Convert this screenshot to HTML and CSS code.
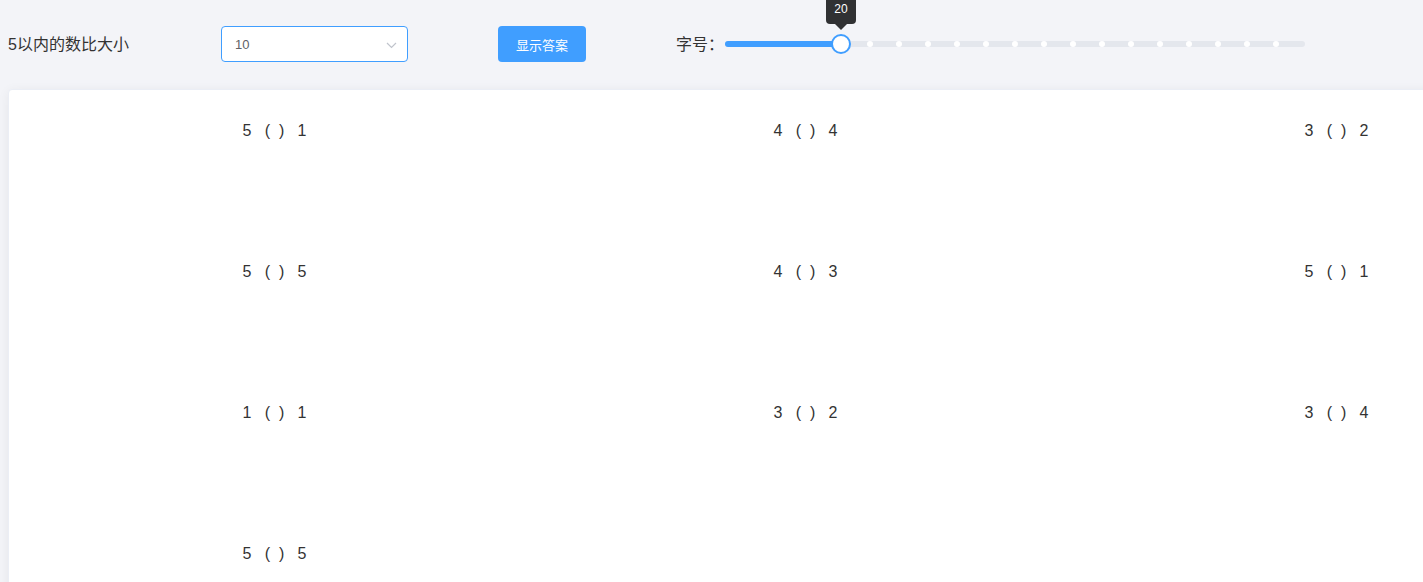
FILE: index.html
```html
<!DOCTYPE html>
<html lang="zh">
<head>
<meta charset="utf-8">
<title>5以内的数比大小</title>
<link rel="stylesheet" href="styles.css">
</head>
<body>
<div class="page">
<div class="toolbar">
  <div class="title">5以内的数比大小</div>
  <div class="select">
    <span class="select-value">10</span>
    <svg class="select-arrow" width="11" height="7" viewBox="0 0 11 7"><path d="M1 1 L5.5 5.5 L10 1" fill="none" stroke="#c0c4cc" stroke-width="1.2"/></svg>
  </div>
  <button class="btn">显示答案</button>
  <div class="size-label">字号：</div>
  <div class="slider">
    <div class="runway">
      <div class="bar" style="width:20%"></div>
      <div class="stops">
        <span class="stop" style="left:25%"></span>
        <span class="stop" style="left:30%"></span>
        <span class="stop" style="left:35%"></span>
        <span class="stop" style="left:40%"></span>
        <span class="stop" style="left:45%"></span>
        <span class="stop" style="left:50%"></span>
        <span class="stop" style="left:55%"></span>
        <span class="stop" style="left:60%"></span>
        <span class="stop" style="left:65%"></span>
        <span class="stop" style="left:70%"></span>
        <span class="stop" style="left:75%"></span>
        <span class="stop" style="left:80%"></span>
        <span class="stop" style="left:85%"></span>
        <span class="stop" style="left:90%"></span>
        <span class="stop" style="left:95%"></span>
      </div>
      <div class="thumb-wrap" style="left:20%">
        <div class="tooltip">20</div>
        <div class="thumb"></div>
      </div>
    </div>
  </div>
</div>
<div class="card">
  <div class="cell">5   (  )   1</div>
  <div class="cell">4   (  )   4</div>
  <div class="cell">3   (  )   2</div>
  <div class="cell">5   (  )   5</div>
  <div class="cell">4   (  )   3</div>
  <div class="cell">5   (  )   1</div>
  <div class="cell">1   (  )   1</div>
  <div class="cell">3   (  )   2</div>
  <div class="cell">3   (  )   4</div>
  <div class="cell">5   (  )   5</div>
</div>
</div>
</body>
</html>
```
FILE: styles.css
```css
html {
  overflow: hidden;
}
body {
  margin: 0;
  background: #f3f4f8;
  font-family: "Liberation Sans", "Noto Sans CJK SC", sans-serif;
  color: #333;
}
.page {
  padding: 8px;
  width: 1423px;
  height: 582px;
  box-sizing: border-box;
  overflow: hidden;
}
.toolbar {
  height: 72px;
  margin-bottom: 9px;
  display: flex;
  align-items: center;
}
.title {
  width: 213px;
  font-size: 16px;
  line-height: 20px;
  padding-top: 2px;
  color: #333;
}
.select {
  box-sizing: border-box;
  width: 187px;
  height: 36px;
  border: 1px solid #409eff;
  border-radius: 4px;
  background: #fff;
  display: flex;
  align-items: center;
  justify-content: space-between;
  padding: 0 10px 0 13px;
}
.select-value {
  font-size: 13px;
  color: #606266;
}
.select-arrow {
  display: block;
  margin-top: 2px;
}
.btn {
  margin-left: 90px;
  width: 88px;
  height: 36px;
  border: none;
  border-radius: 4px;
  background: #409eff;
  color: #fff;
  font-family: "Liberation Sans", "Noto Sans CJK SC", sans-serif;
  font-size: 13px;
  padding: 0;
}
.size-label {
  margin-left: 90px;
  font-size: 16px;
  line-height: 20px;
  padding-top: 2px;
  color: #333;
}
.slider {
  margin-left: 1px;
  width: 580px;
  height: 20px;
  display: flex;
  align-items: center;
}
.runway {
  position: relative;
  width: 100%;
  height: 6px;
  border-radius: 3px;
  background: #e4e7ed;
}
.bar {
  height: 6px;
  border-radius: 3px;
  background: #409eff;
}
.stop {
  position: absolute;
  top: 0;
  width: 6px;
  height: 6px;
  border-radius: 50%;
  background: #fff;
  transform: translateX(-50%);
}
.thumb-wrap {
  position: absolute;
  top: 3px;
  width: 0;
  height: 0;
}
.thumb {
  position: absolute;
  left: -10px;
  top: -10px;
  box-sizing: border-box;
  width: 20px;
  height: 20px;
  border: 2px solid #409eff;
  border-radius: 50%;
  background: #fff;
}
.tooltip {
  position: absolute;
  left: -15px;
  bottom: 20px;
  width: 30px;
  box-sizing: border-box;
  padding: 10px 0 8px;
  text-align: center;
  background: #303133;
  color: #fff;
  font-size: 12px;
  line-height: 14px;
  border-radius: 4px;
}
.tooltip::after {
  content: "";
  position: absolute;
  left: 50%;
  bottom: -6px;
  margin-left: -6px;
  border-style: solid;
  border-width: 6px 6px 0 6px;
  border-color: #303133 transparent transparent transparent;
}
.card {
  width: 1593px;
  min-height: 600px;
  background: #fff;
  border: 1px solid #ebeef5;
  border-radius: 4px;
  box-shadow: 0 2px 12px 0 rgba(0, 0, 0, 0.06);
  display: grid;
  grid-template-columns: repeat(3, 531px);
  grid-auto-rows: 141px;
}
.cell {
  padding-top: 31px;
  text-align: center;
  white-space: pre;
  font-size: 16px;
  line-height: 20px;
  color: #333;
}
```
